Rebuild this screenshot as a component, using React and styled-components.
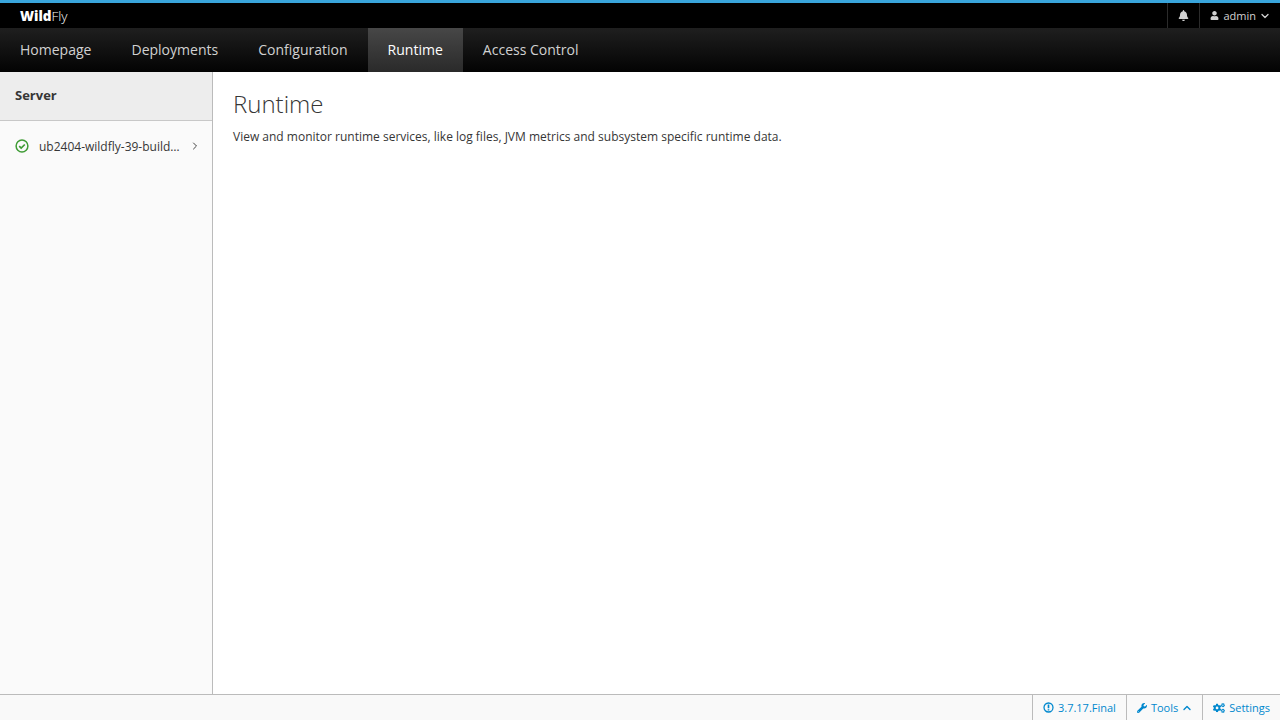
import styled, { createGlobalStyle } from "styled-components";
import { FaBell, FaUser, FaWrench, FaCogs } from "react-icons/fa";
import { ChevronDown, ChevronUp, ChevronRight } from "lucide-react";

const GlobalStyle = createGlobalStyle`
  html, body { margin: 0; padding: 0; height: 100%; }
  body { font-family: "Open Sans", "Liberation Sans", sans-serif; background: #fff; color: #363636; }
  #root { height: 100%; }
  * { box-sizing: border-box; }
`;

const Page = styled.div`
  display: flex;
  flex-direction: column;
  height: 720px;
  overflow: hidden;
`;

const Utility = styled.header`
  display: flex;
  justify-content: space-between;
  height: 28px;
  background: #000;
  border-top: 3px solid #39a5dc;
  color: #d1d1d1;
`;

const Brand = styled.div`
  padding-left: 20px;
  font-size: 13.5px;
  line-height: 26px;
  color: #fff;
  font-weight: 300;
  b { font-weight: 800; color: #fff; }
`;

const UtilityActions = styled.div`
  display: flex;
`;

const UtilityItem = styled.div`
  display: flex;
  align-items: center;
  gap: 4px;
  padding: 0 10px;
  border-left: 1px solid #2b2b2b;
  font-size: 11px;
  svg { flex: none; }
`;

const CaretDown = styled(ChevronDown)`
  margin: 0 -1px;
`;

const CaretUp = styled(ChevronUp)`
  margin: 0 -1px;
`;

const Nav = styled.nav`
  display: flex;
  height: 44px;
  background: linear-gradient(#1f1f1f, #030303);
`;

const NavItem = styled.div`
  display: flex;
  align-items: center;
  padding: 0 20px 2px;
  font-size: 14.02px;
  color: ${(p) => (p.$active ? "#fff" : "#d1d1d1")};
  background: ${(p) => (p.$active ? "linear-gradient(#474747, #2a2a2a)" : "none")};
`;

const Body = styled.div`
  display: flex;
  flex: 1;
  min-height: 0;
`;

const Sidebar = styled.aside`
  width: 213px;
  flex: none;
  background: #fafafa;
  border-right: 1px solid #bbb;
`;

const SidebarHeader = styled.div`
  height: 49px;
  padding: 0 15px 2px;
  display: flex;
  align-items: center;
  background: #ededed;
  border-bottom: 1px solid #c8c8c8;
  font-size: 13px;
  font-weight: 700;
  color: #363636;
`;

const ServerRow = styled.div`
  display: flex;
  align-items: center;
  height: 50px;
  padding: 0 11px 0 15px;
  font-size: 12px;
  color: #363636;
`;

const ServerName = styled.span`
  flex: 1;
  margin-left: 10px;
  white-space: nowrap;
`;

const Chevron = styled.span`
  display: flex;
  color: #444;
`;

const Main = styled.main`
  flex: 1;
  padding: 17px 20px;
`;

const Title = styled.h1`
  margin: 0;
  font-size: 24px;
  line-height: 30px;
  font-weight: 300;
  color: #363636;
`;

const Lead = styled.p`
  margin: 9px 0 0;
  font-size: 12px;
  line-height: 18px;
  color: #363636;
`;

const Footer = styled.footer`
  display: flex;
  justify-content: flex-end;
  height: 26px;
  background: #f9f9f9;
  border-top: 1px solid #bbb;
`;

const FooterItem = styled.div`
  display: flex;
  align-items: center;
  gap: 4px;
  padding: 0 10px;
  border-left: 1px solid #bbb;
  font-size: 11px;
  color: #0088ce;
`;

const CheckIcon = () => (
  <svg width="14" height="14" viewBox="0 0 14 14" fill="none" stroke="#3f9c35" strokeWidth="1.5">
    <circle cx="7" cy="7" r="5.9" />
    <path d="M4.2 7.1l2 2 3.6-3.6" strokeWidth="1.7" />
  </svg>
);

const InfoIcon = () => (
  <svg width="11" height="11" viewBox="0 0 12 12" fill="none" stroke="#0088ce" strokeWidth="1.4">
    <circle cx="6" cy="6" r="4.9" />
    <path d="M6 2.8v3.9M6 7.9v1.4" strokeWidth="1.8" />
  </svg>
);

const navItems = ["Homepage", "Deployments", "Configuration", "Runtime", "Access Control"];

export default function App() {
  return (
    <Page>
      <GlobalStyle />
      <Utility>
        <Brand>
          <b>Wild</b>Fly
        </Brand>
        <UtilityActions>
          <UtilityItem>
            <FaBell size={11} />
          </UtilityItem>
          <UtilityItem>
            <FaUser size={9} />
            admin
            <CaretDown size={12} strokeWidth={2.6} />
          </UtilityItem>
        </UtilityActions>
      </Utility>
      <Nav>
        {navItems.map((name) => (
          <NavItem key={name} $active={name === "Runtime"}>
            {name}
          </NavItem>
        ))}
      </Nav>
      <Body>
        <Sidebar>
          <SidebarHeader>Server</SidebarHeader>
          <ServerRow>
            <CheckIcon />
            <ServerName>ub2404-wildfly-39-build…</ServerName>
            <Chevron>
              <ChevronRight size={12} strokeWidth={2} />
            </Chevron>
          </ServerRow>
        </Sidebar>
        <Main>
          <Title>Runtime</Title>
          <Lead>View and monitor runtime services, like log files, JVM metrics and subsystem specific runtime data.</Lead>
        </Main>
      </Body>
      <Footer>
        <FooterItem>
          <InfoIcon />
          3.7.17.Final
        </FooterItem>
        <FooterItem>
          <FaWrench size={10} />
          Tools
          <CaretUp size={12} strokeWidth={2.8} />
        </FooterItem>
        <FooterItem>
          <FaCogs size={12} />
          Settings
        </FooterItem>
      </Footer>
    </Page>
  );
}
